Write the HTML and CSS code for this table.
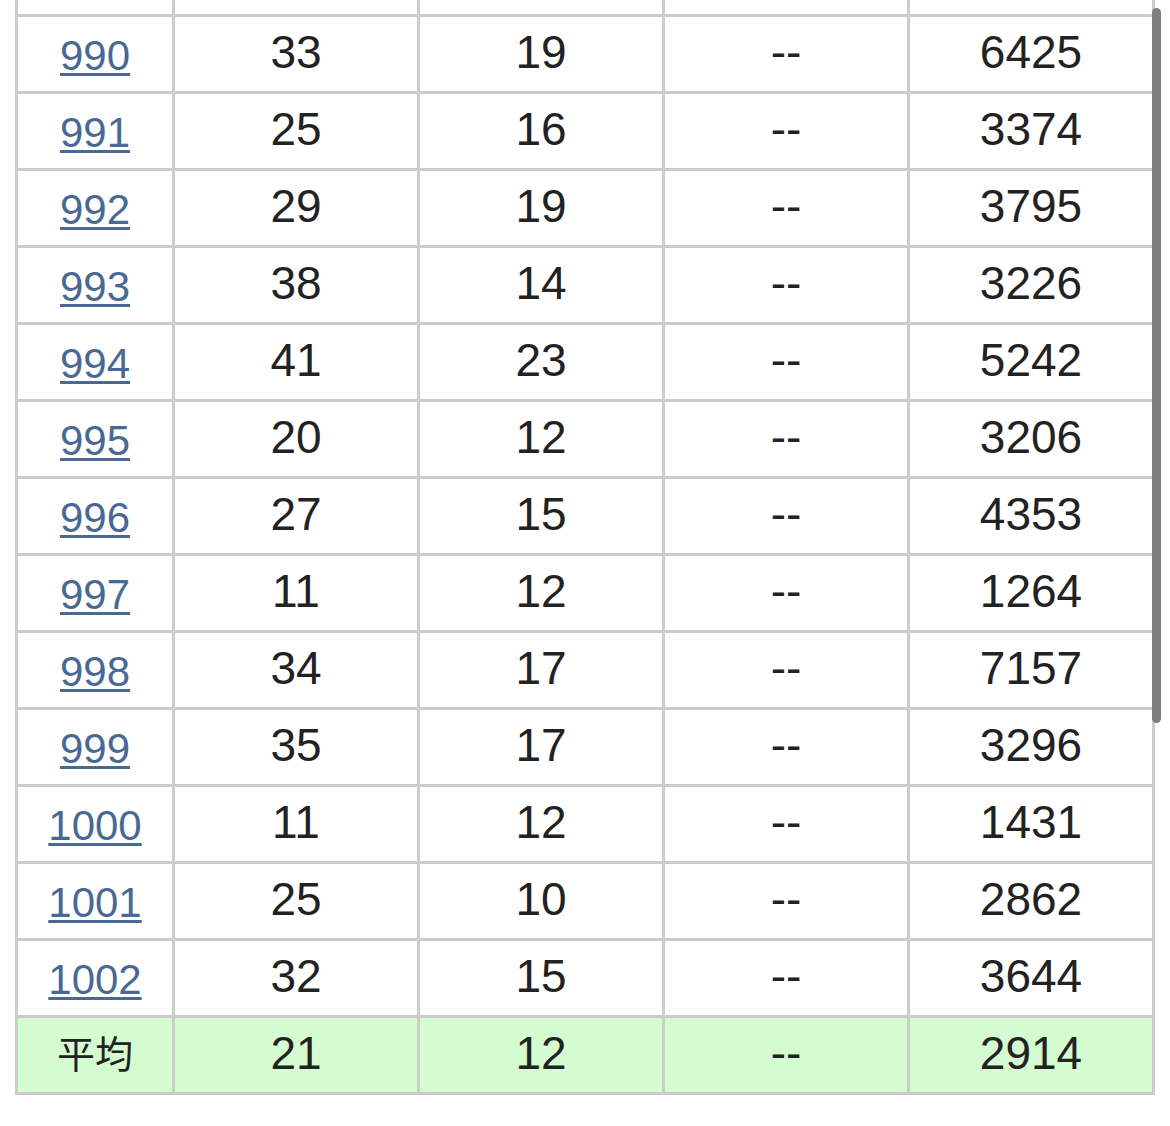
FILE: index.html
```html
<!DOCTYPE html>
<html lang="ja">
<head>
<meta charset="utf-8">
<link rel="stylesheet" href="styles.css">
</head>
<body>
<div class="page">
<table class="stats">
<colgroup><col class="c1"><col class="cn"><col class="cn"><col class="cn"><col class="cn"></colgroup>
<tbody>
<tr class="cut"><td></td><td></td><td></td><td></td><td></td></tr>
<tr><td><a href="#">990</a></td><td>33</td><td>19</td><td>--</td><td>6425</td></tr>
<tr><td><a href="#">991</a></td><td>25</td><td>16</td><td>--</td><td>3374</td></tr>
<tr><td><a href="#">992</a></td><td>29</td><td>19</td><td>--</td><td>3795</td></tr>
<tr><td><a href="#">993</a></td><td>38</td><td>14</td><td>--</td><td>3226</td></tr>
<tr><td><a href="#">994</a></td><td>41</td><td>23</td><td>--</td><td>5242</td></tr>
<tr><td><a href="#">995</a></td><td>20</td><td>12</td><td>--</td><td>3206</td></tr>
<tr><td><a href="#">996</a></td><td>27</td><td>15</td><td>--</td><td>4353</td></tr>
<tr><td><a href="#">997</a></td><td>11</td><td>12</td><td>--</td><td>1264</td></tr>
<tr><td><a href="#">998</a></td><td>34</td><td>17</td><td>--</td><td>7157</td></tr>
<tr><td><a href="#">999</a></td><td>35</td><td>17</td><td>--</td><td>3296</td></tr>
<tr><td><a href="#">1000</a></td><td>11</td><td>12</td><td>--</td><td>1431</td></tr>
<tr><td><a href="#">1001</a></td><td>25</td><td>10</td><td>--</td><td>2862</td></tr>
<tr><td><a href="#">1002</a></td><td>32</td><td>15</td><td>--</td><td>3644</td></tr>
<tr class="avg"><td class="label">平均</td><td>21</td><td>12</td><td>--</td><td>2914</td></tr>
</tbody>
</table>
<div class="scrollbar"></div>
</div>
</body>
</html>
```

FILE: styles.css
```css
html, body {
  margin: 0;
  padding: 0;
  background: #ffffff;
}

.page {
  position: relative;
  padding-left: 15px;
  height: 1126px;
  overflow: hidden;
}

.stats {
  border-collapse: separate;
  border-spacing: 0;
  table-layout: fixed;
  width: 1140px;
  border-left: 3px solid #cccccc;
  font-family: "Liberation Sans", Arial, "Noto Sans CJK JP", sans-serif;
  color: #222222;
}

.c1 { width: 157px; }
.cn { width: 245px; }

.stats td {
  box-sizing: border-box;
  height: 77px;
  padding: 0 0 4px 0;
  border-right: 3px solid #cccccc;
  border-bottom: 3px solid #cccccc;
  text-align: center;
  vertical-align: middle;
  font-size: 46px;
  line-height: 1.1;
}

.stats tr.cut td {
  height: 17px;
  padding: 0;
}

.stats a {
  color: #4a6894;
  font-size: 42px;
  text-decoration: underline;
  text-decoration-thickness: 3px;
  text-underline-offset: 3px;
  position: relative;
  top: 2px;
}

.stats tr.avg td {
  background: #d5fbd0;
}

.stats td.label {
  font-family: "Noto Sans CJK JP", "Noto Sans CJK SC", sans-serif;
  font-weight: 400;
  font-size: 38px;
  padding-bottom: 6px;
}

.scrollbar {
  position: absolute;
  left: 1152px;
  top: 8px;
  width: 9px;
  height: 715px;
  border-radius: 5px;
  background: #7d7d7d;
}
```
